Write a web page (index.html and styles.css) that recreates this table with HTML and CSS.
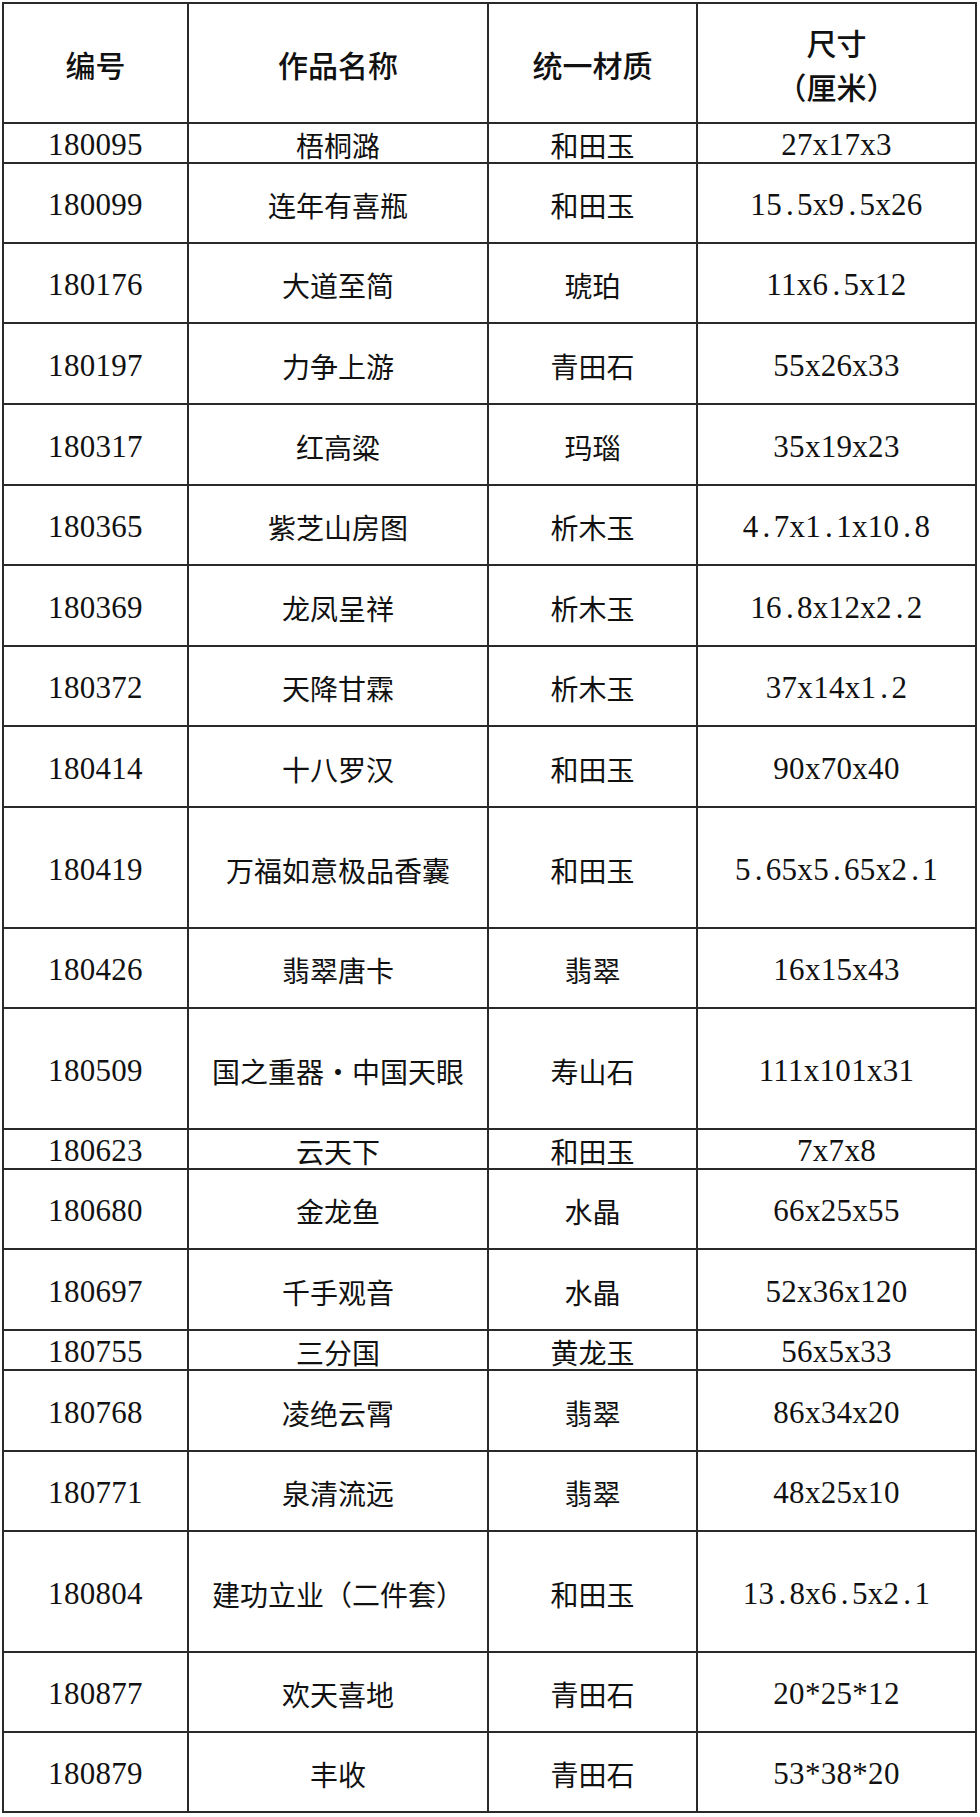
FILE: index.html
```html
<!DOCTYPE html>
<html lang="zh-CN">
<head>
<meta charset="utf-8">
<title>作品列表</title>
<link rel="stylesheet" href="styles.css">
</head>
<body>
<table class="works">
  <colgroup>
    <col class="c-id">
    <col class="c-name">
    <col class="c-mat">
    <col class="c-size">
  </colgroup>
  <thead>
    <tr class="h">
      <th>编号</th>
      <th>作品名称</th>
      <th>统一材质</th>
      <th><span class="hl">尺寸</span><span class="hl">（厘米）</span></th>
    </tr>
  </thead>
  <tbody>
    <tr class="s"><td class="num">180095</td><td>梧桐潞</td><td>和田玉</td><td class="num">27x17x3</td></tr>
    <tr class="n"><td class="num">180099</td><td>连年有喜瓶</td><td>和田玉</td><td class="num">15<span class="dot">.</span>5x9<span class="dot">.</span>5x26</td></tr>
    <tr class="n"><td class="num">180176</td><td>大道至简</td><td>琥珀</td><td class="num">11x6<span class="dot">.</span>5x12</td></tr>
    <tr class="n1"><td class="num">180197</td><td>力争上游</td><td>青田石</td><td class="num">55x26x33</td></tr>
    <tr class="n1"><td class="num">180317</td><td>红高粱</td><td>玛瑙</td><td class="num">35x19x23</td></tr>
    <tr class="n"><td class="num">180365</td><td>紫芝山房图</td><td>析木玉</td><td class="num">4<span class="dot">.</span>7x1<span class="dot">.</span>1x10<span class="dot">.</span>8</td></tr>
    <tr class="n1"><td class="num">180369</td><td>龙凤呈祥</td><td>析木玉</td><td class="num">16<span class="dot">.</span>8x12x2<span class="dot">.</span>2</td></tr>
    <tr class="n"><td class="num">180372</td><td>天降甘霖</td><td>析木玉</td><td class="num">37x14x1<span class="dot">.</span>2</td></tr>
    <tr class="n1"><td class="num">180414</td><td>十八罗汉</td><td>和田玉</td><td class="num">90x70x40</td></tr>
    <tr class="t"><td class="num">180419</td><td>万福如意极品香囊</td><td>和田玉</td><td class="num">5<span class="dot">.</span>65x5<span class="dot">.</span>65x2<span class="dot">.</span>1</td></tr>
    <tr class="n"><td class="num">180426</td><td>翡翠唐卡</td><td>翡翠</td><td class="num">16x15x43</td></tr>
    <tr class="t"><td class="num">180509</td><td>国之重器·中国天眼</td><td>寿山石</td><td class="num">111x101x31</td></tr>
    <tr class="s"><td class="num">180623</td><td>云天下</td><td>和田玉</td><td class="num">7x7x8</td></tr>
    <tr class="n"><td class="num">180680</td><td>金龙鱼</td><td>水晶</td><td class="num">66x25x55</td></tr>
    <tr class="n1"><td class="num">180697</td><td>千手观音</td><td>水晶</td><td class="num">52x36x120</td></tr>
    <tr class="s"><td class="num">180755</td><td>三分国</td><td>黄龙玉</td><td class="num">56x5x33</td></tr>
    <tr class="n1"><td class="num">180768</td><td>凌绝云霄</td><td>翡翠</td><td class="num">86x34x20</td></tr>
    <tr class="n"><td class="num">180771</td><td>泉清流远</td><td>翡翠</td><td class="num">48x25x10</td></tr>
    <tr class="t"><td class="num">180804</td><td>建功立业（二件套）</td><td>和田玉</td><td class="num">13<span class="dot">.</span>8x6<span class="dot">.</span>5x2<span class="dot">.</span>1</td></tr>
    <tr class="n"><td class="num">180877</td><td>欢天喜地</td><td>青田石</td><td class="num">20*25*12</td></tr>
    <tr class="n"><td class="num">180879</td><td>丰收</td><td>青田石</td><td class="num">53*38*20</td></tr>
  </tbody>
</table>
</body>
</html>
```
FILE: styles.css
```css
html, body {
  margin: 0;
  padding: 0;
  background: #ffffff;
}

body {
  padding: 2px 0 0 2px;
}

.works {
  border-collapse: collapse;
  table-layout: fixed;
  width: 975px;
  color: #111111;
  font-family: "Noto Sans CJK SC", "Liberation Serif", sans-serif;
}

.c-id { width: 185px; }
.c-name { width: 300px; }
.c-mat { width: 209px; }
.c-size { width: 279px; }

.works th,
.works td {
  border: 2px solid #2a2a2a;
  padding: 0;
  text-align: center;
  vertical-align: middle;
  white-space: nowrap;
}

.works th {
  font-size: 30px;
  font-weight: 500;
  line-height: 44px;
  padding-top: 2px;
}

.hl {
  display: block;
  line-height: 44px;
}

.works td {
  font-size: 28px;
  font-weight: 400;
  line-height: 34px;
  padding-top: 4px;
}

.works td.num {
  font-family: "Liberation Serif", "Noto Sans CJK SC", serif;
  font-size: 31px;
  letter-spacing: 0.3px;
}

.dot {
  margin: 0 3px 0 4px;
}

.h { height: 120px; }
.s { height: 40px; }
.n { height: 80px; }
.n1 { height: 81px; }
.t { height: 121px; }
```
